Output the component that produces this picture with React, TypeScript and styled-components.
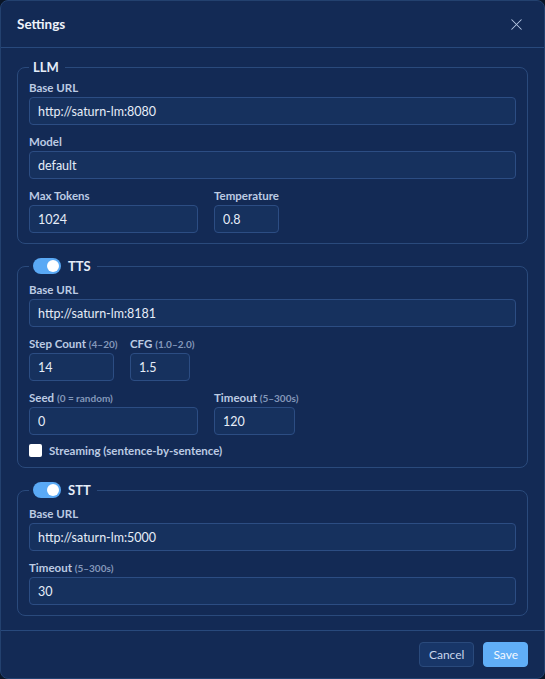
import React from "react";
import styled, { createGlobalStyle } from "styled-components";
import { X } from "lucide-react";

const GlobalStyle = createGlobalStyle`
  html, body {
    margin: 0;
    padding: 0;
    background: #0a1527;
  }
  * {
    box-sizing: border-box;
  }
`;

const Dialog = styled.div`
  width: 545px;
  height: 679px;
  display: flex;
  flex-direction: column;
  background: #132a55;
  border: 1px solid #23416f;
  border-radius: 8px;
  font-family: Lato, "Noto Sans", sans-serif;
  color: #e2eaf6;
  overflow: hidden;
`;

const Header = styled.div`
  height: 47px;
  flex: none;
  display: flex;
  align-items: center;
  justify-content: space-between;
  padding: 0 16px;
  border-bottom: 1px solid #28497c;
`;

const Title = styled.h2`
  margin: 0;
  font-size: 13.5px;
  font-weight: 700;
  color: #eef3fb;
`;

const CloseButton = styled.button`
  background: none;
  border: none;
  padding: 0;
  margin-right: 2px;
  display: flex;
  color: #b7c8e3;
  cursor: pointer;
`;

const Body = styled.div`
  flex: 1;
  display: flex;
  flex-direction: column;
  gap: 13px;
  padding: 10px 16px 14px;
`;

const Section = styled.fieldset<{ $toggle?: boolean }>`
  margin: 0;
  padding: ${(p) => (p.$toggle ? "7px" : "4px")} 11px 10px;
  border: 1px solid #2a4a7c;
  border-radius: 8px;
  display: flex;
  flex-direction: column;
  gap: 9px;
`;

const Legend = styled.legend`
  padding: 0 6px 0 4px;
  height: 18px;
  display: flex;
  align-items: center;
  gap: 7px;
  font-size: 13px;
  font-weight: 700;
  color: #e4ecf8;
`;

const Toggle = styled.span<{ $on: boolean }>`
  position: relative;
  width: 28px;
  height: 16px;
  border-radius: 8px;
  background: ${(p) => (p.$on ? "#5aa9f5" : "#2a4a7c")};
  &::after {
    content: "";
    position: absolute;
    top: 2px;
    left: ${(p) => (p.$on ? "14px" : "2px")};
    width: 12px;
    height: 12px;
    border-radius: 50%;
    background: #ffffff;
  }
`;

const Row = styled.div`
  display: flex;
  gap: 16px;
`;

const Field = styled.label<{ $width?: number }>`
  display: flex;
  flex-direction: column;
  gap: 1px;
  width: ${(p) => (p.$width ? `${p.$width}px` : "100%")};
`;

const LabelText = styled.span`
  font-size: 11.5px;
  font-weight: 700;
  line-height: 16px;
  color: #bccbe3;
  white-space: nowrap;
`;

const Hint = styled.span`
  font-size: 10px;
  font-weight: 700;
  color: #8398ba;
`;

const Input = styled.input`
  width: 100%;
  height: 28px;
  padding: 0 8px;
  background: #16315e;
  border: 1px solid #2c4d83;
  border-radius: 4px;
  color: #e6edf8;
  font-family: inherit;
  font-size: 12.5px;
  outline: none;
`;

const CheckRow = styled.label`
  display: flex;
  align-items: center;
  gap: 7px;
  font-size: 11.5px;
  font-weight: 700;
  color: #bccbe3;
`;

const CheckBox = styled.span`
  width: 13px;
  height: 13px;
  background: #ffffff;
  border-radius: 2px;
`;

const Footer = styled.div`
  flex: none;
  height: 48px;
  display: flex;
  align-items: center;
  justify-content: flex-end;
  gap: 9px;
  padding: 0 16px;
  border-top: 1px solid #28497c;
`;

const Button = styled.button<{ $primary?: boolean }>`
  height: 25px;
  padding: 0 9px;
  border-radius: 4px;
  font-family: inherit;
  font-size: 12px;
  border: 1px solid ${(p) => (p.$primary ? "#60aef7" : "#2a4a7c")};
  background: ${(p) => (p.$primary ? "#60aef7" : "#183668")};
  color: ${(p) => (p.$primary ? "#f4f9ff" : "#c9d7ec")};
  cursor: pointer;
`;

type FieldProps = {
  label: string;
  hint?: string;
  value: string;
  width?: number;
};

const TextField: React.FC<FieldProps> = ({ label, hint, value, width }) => (
  <Field $width={width}>
    <LabelText>
      {label} {hint && <Hint>{hint}</Hint>}
    </LabelText>
    <Input defaultValue={value} />
  </Field>
);

const App: React.FC = () => {
  return (
    <>
      <GlobalStyle />
      <Dialog>
        <Header>
          <Title>Settings</Title>
          <CloseButton aria-label="Close">
            <X size={19} strokeWidth={1.3} />
          </CloseButton>
        </Header>

        <Body>
          <Section>
            <Legend>LLM</Legend>
            <TextField label="Base URL" value="http://saturn-lm:8080" />
            <TextField label="Model" value="default" />
            <Row>
              <TextField label="Max Tokens" value="1024" width={169} />
              <TextField label="Temperature" value="0.8" width={65} />
            </Row>
          </Section>

          <Section $toggle>
            <Legend>
              <Toggle $on={true} />
              TTS
            </Legend>
            <TextField label="Base URL" value="http://saturn-lm:8181" />
            <Row>
              <TextField label="Step Count" hint="(4–20)" value="14" width={85} />
              <TextField label="CFG" hint="(1.0–2.0)" value="1.5" width={60} />
            </Row>
            <Row>
              <TextField label="Seed" hint="(0 = random)" value="0" width={169} />
              <TextField label="Timeout" hint="(5–300s)" value="120" width={81} />
            </Row>
            <CheckRow>
              <CheckBox />
              Streaming (sentence-by-sentence)
            </CheckRow>
          </Section>

          <Section $toggle>
            <Legend>
              <Toggle $on={true} />
              STT
            </Legend>
            <TextField label="Base URL" value="http://saturn-lm:5000" />
            <TextField label="Timeout" hint="(5–300s)" value="30" />
          </Section>
        </Body>

        <Footer>
          <Button>Cancel</Button>
          <Button $primary>Save</Button>
        </Footer>
      </Dialog>
    </>
  );
};

export default App;
